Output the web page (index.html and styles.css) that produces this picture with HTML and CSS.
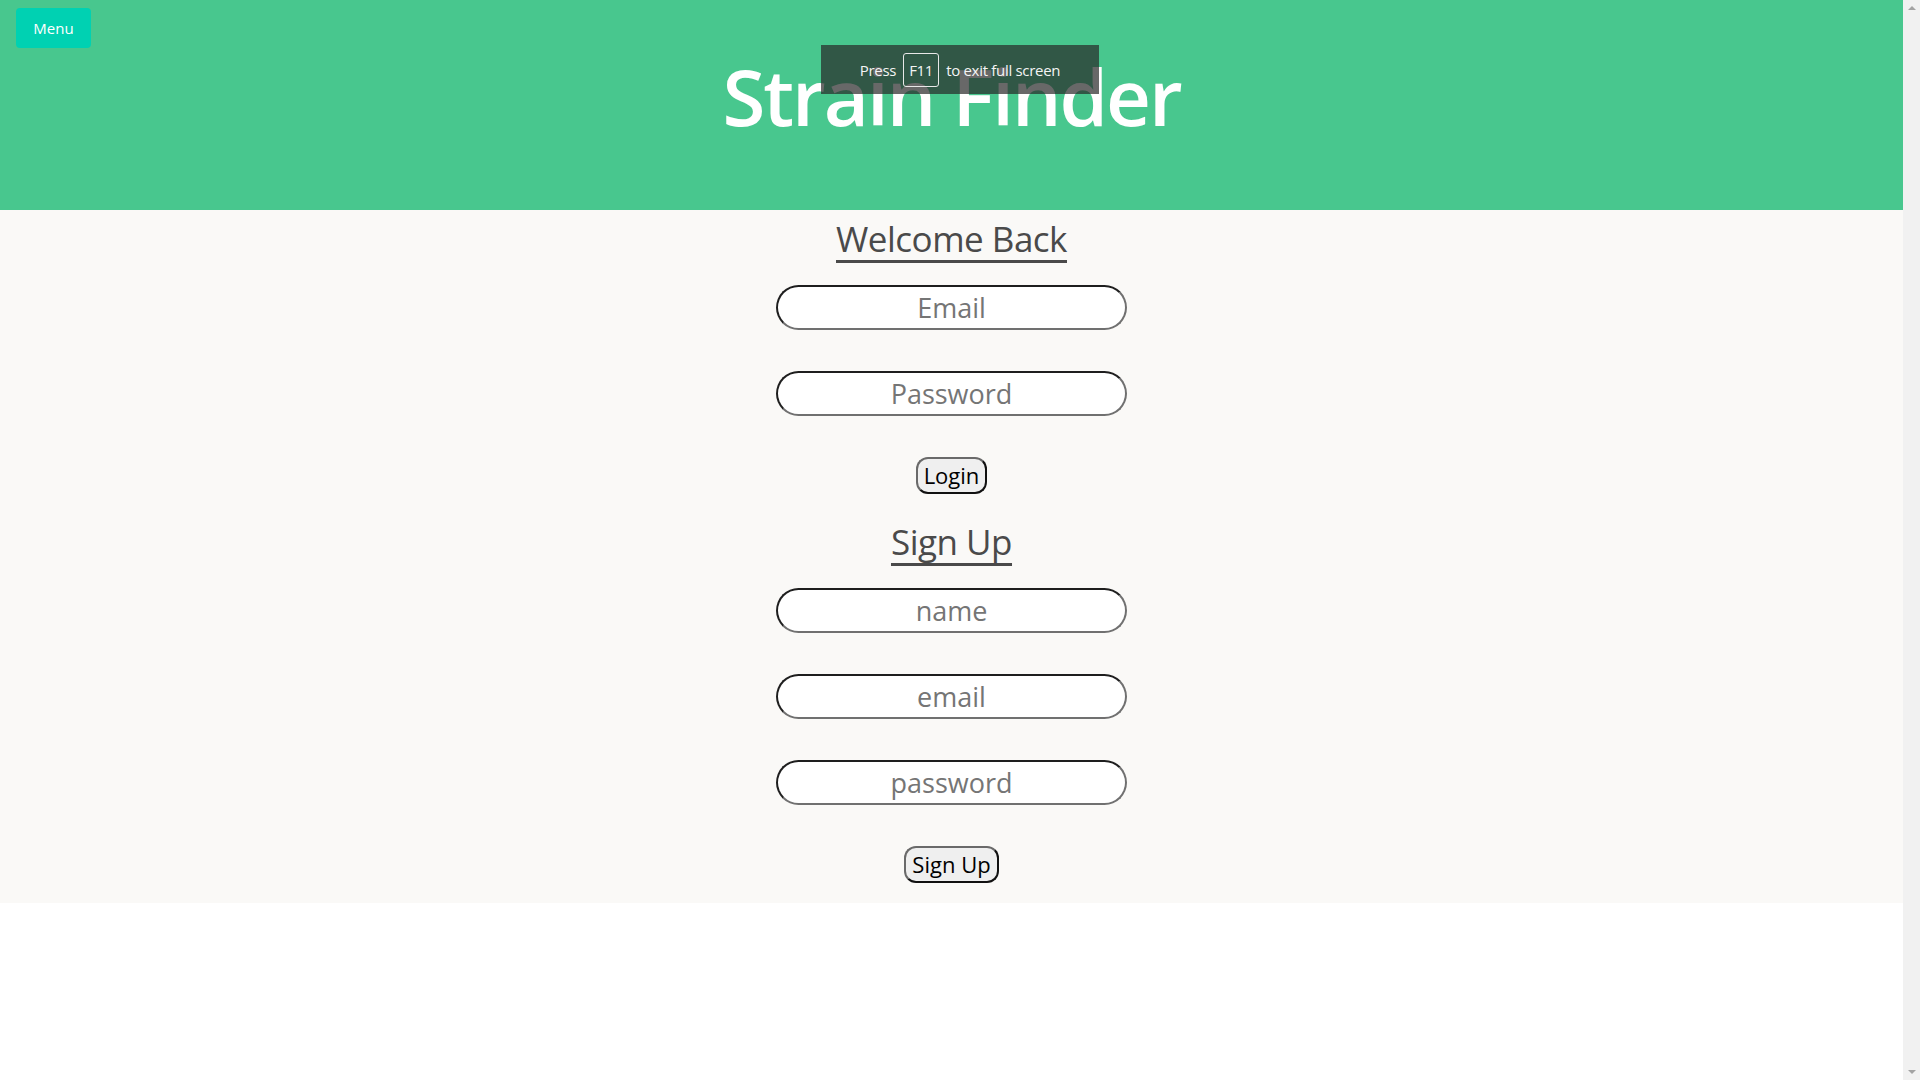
FILE: index.html
```html
<!DOCTYPE html>
<html lang="en">
<head>
<meta charset="utf-8">
<title>Strain Finder</title>
<link rel="stylesheet" href="styles.css">
</head>
<body>
<header class="hero">
  <button class="menu-btn" type="button">Menu</button>
  <h1 class="hero-title">Strain Finder</h1>
  <div class="fs-notice">Press <span class="key">F11</span> to exit full screen</div>
</header>
<main class="auth">
  <h2 class="auth-heading">Welcome Back</h2>
  <input class="field" type="email" placeholder="Email">
  <input class="field" type="password" placeholder="Password">
  <button class="submit" type="button">Login</button>
  <h2 class="auth-heading">Sign Up</h2>
  <input class="field" type="text" placeholder="name">
  <input class="field" type="email" placeholder="email">
  <input class="field" type="password" placeholder="password">
  <button class="submit" type="button">Sign Up</button>
</main>
<div class="scrollbar" aria-hidden="true">
  <span class="arrow-up"></span>
  <span class="arrow-down"></span>
</div>
</body>
</html>
```
FILE: styles.css
```css
html {
  background: #ffffff;
}
body {
  margin: 0 17px 0 0;
  font-family: "Open Sans", "Noto Sans", sans-serif;
}
.hero {
  position: relative;
  height: 210px;
  box-sizing: border-box;
  padding-top: 57px;
  background: #48c78e;
  text-align: center;
}
.hero-title {
  margin: 0;
  font-size: 78px;
  line-height: 78px;
  font-weight: 600;
  letter-spacing: -2px;
  color: #ffffff;
}
.menu-btn {
  position: absolute;
  left: 16px;
  top: 8px;
  width: 75px;
  height: 40px;
  border: 0;
  border-radius: 4px;
  background: #00d1b2;
  color: #ffffff;
  font-family: "Open Sans", sans-serif;
  font-size: 15px;
  padding: 0;
}
.fs-notice {
  position: absolute;
  left: 821px;
  top: 45px;
  width: 278px;
  height: 49px;
  box-sizing: border-box;
  display: flex;
  align-items: center;
  justify-content: center;
  gap: 7px;
  background: rgba(40, 40, 40, 0.7);
  color: #f4f4f4;
  font-size: 15px;
  letter-spacing: -0.3px;
  font-family: "Open Sans", sans-serif;
}
.key {
  display: inline-flex;
  align-items: center;
  justify-content: center;
  width: 36px;
  height: 34px;
  box-sizing: border-box;
  border: 1px solid #e8e8e8;
  border-radius: 3px;
}
.auth {
  display: flex;
  flex-direction: column;
  align-items: center;
  padding: 6px 0 20px;
  background: #faf9f7;
}
.auth-heading {
  margin: 0 0 23px;
  font-size: 35px;
  line-height: 46px;
  font-weight: 400;
  letter-spacing: -0.5px;
  color: #4a4a4a;
  text-decoration: underline;
  text-decoration-thickness: 3px;
  text-underline-offset: 8px;
}
.field {
  width: 351px;
  height: 45px;
  box-sizing: border-box;
  margin: 0 0 41px;
  padding: 1px 2px;
  border: 2px solid;
  border-color: #1e1e1e #707070 #707070 #1e1e1e;
  border-radius: 23px;
  background: #ffffff;
  font-family: "Open Sans", sans-serif;
  font-size: 27px;
  text-align: center;
  color: #222;
}
.field::placeholder {
  color: #757575;
}
.submit {
  height: 37px;
  box-sizing: border-box;
  margin: 0 0 25px;
  padding: 0 6px;
  border: 2px solid;
  border-color: #6a6a6a #111 #111 #6a6a6a;
  border-radius: 12px;
  background: #efefef;
  color: #000;
  font-family: "Open Sans", sans-serif;
  font-size: 22px;
  line-height: 31px;
}
.submit:last-child {
  margin-bottom: 0;
}
.scrollbar {
  position: fixed;
  top: 0;
  right: 0;
  width: 17px;
  height: 100vh;
  background: #f1f1f1;
}
.arrow-up,
.arrow-down {
  position: absolute;
  left: 5px;
  width: 0;
  height: 0;
  border-left: 4px solid transparent;
  border-right: 4px solid transparent;
}
.arrow-up {
  top: 6px;
  border-bottom: 4px solid #a3a3a3;
}
.arrow-down {
  bottom: 6px;
  border-top: 4px solid #a3a3a3;
}
```
